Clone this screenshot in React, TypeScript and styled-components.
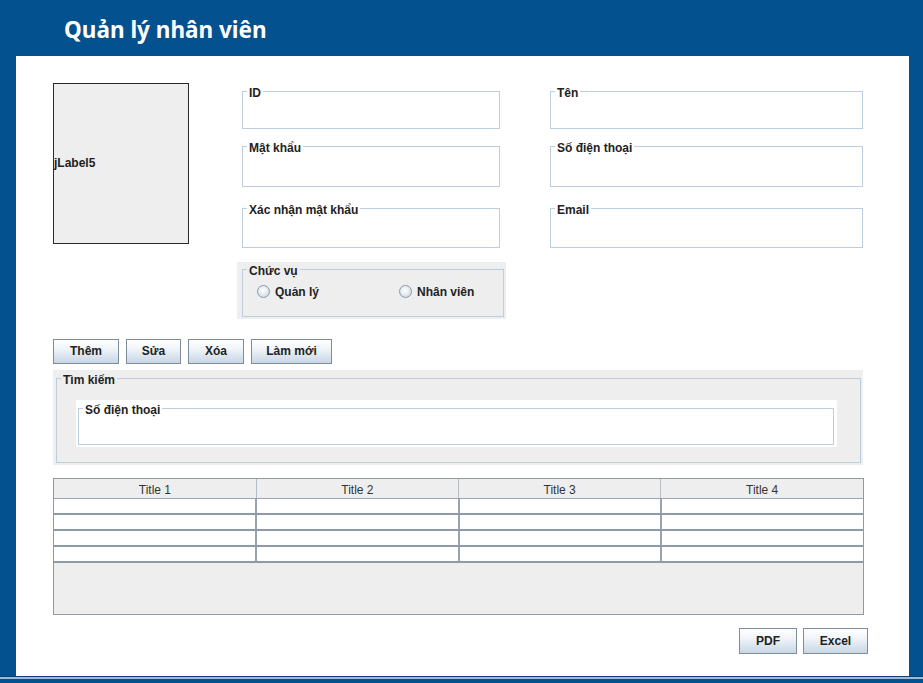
import React from 'react';
import styled, { createGlobalStyle } from 'styled-components';

const GlobalStyle = createGlobalStyle`
  html, body {
    margin: 0;
    padding: 0;
    background: #03528f;
  }
  body {
    font-family: "Liberation Sans", Arial, sans-serif;
    font-size: 12px;
    color: #222;
  }
`;

const Window = styled.div`
  width: 923px;
  height: 683px;
  background: #03528f;
  display: flex;
  flex-direction: column;
  overflow: hidden;
`;

const Header = styled.header`
  height: 56px;
  box-sizing: border-box;
  padding: 15px 0 0 64px;
`;

const Title = styled.h1`
  margin: 0;
  font-family: "Noto Sans", "Open Sans", sans-serif;
  font-weight: 700;
  font-size: 22.5px;
  line-height: 30px;
  color: #fff;
`;

const Panel = styled.main`
  margin-left: 16px;
  width: 893px;
  height: 621px;
  box-sizing: border-box;
  background: #fff;
  padding: 27px 47px 0 37px;
  display: flex;
  flex-direction: column;
`;

const Footer = styled.div`
  height: 6px;
  border-top: 1px solid #0a3e6e;
  box-shadow: inset 0 2px 0 #9dbad8;
`;

const TopSection = styled.section`
  display: flex;
  align-items: flex-start;
`;

const ImageBox = styled.div`
  flex: none;
  width: 136px;
  height: 161px;
  box-sizing: border-box;
  border: 1px solid #2a2a2a;
  background: #eeeeee;
  display: flex;
  align-items: center;
  font-weight: 700;
`;

const FieldsGrid = styled.div`
  flex: none;
  margin: 2px 0 0 53px;
  display: grid;
  grid-template-columns: 258px 313px;
  grid-template-rows: 55px 62px 60px auto;
  column-gap: 50px;
  align-items: start;
`;

const Group = styled.fieldset<{ $h?: number }>`
  margin: 0;
  padding: 0;
  min-inline-size: 0;
  box-sizing: border-box;
  height: ${(p) => (p.$h ? `${p.$h}px` : '100%')};
  border: 1px solid #bccdde;
`;

const Legend = styled.legend`
  margin-left: 4px;
  padding: 2px 2px 0;
  line-height: 12px;
  font-size: 12px;
  font-weight: 700;
  color: #222;
`;

const FieldInput = styled.input`
  display: block;
  width: 100%;
  box-sizing: border-box;
  border: none;
  background: transparent;
  height: 22px;
  padding: 0 6px;
  font-family: inherit;
  font-size: 12px;
  outline: none;
`;

const RoleBox = styled.div`
  grid-column: 1;
  margin: 0 -6px 0 -5px;
  background: #eeeeee;
  padding: 1px 2px 2px 5px;
`;

const RadioRow = styled.div`
  display: flex;
  padding: 8px 0 0 14px;
`;

const RadioLabel = styled.label`
  flex: none;
  width: 142px;
  display: flex;
  align-items: center;
  gap: 5px;
  font-weight: 700;
  height: 14px;
`;

const Radio = styled.input`
  appearance: none;
  margin: 0;
  width: 13px;
  height: 13px;
  border-radius: 50%;
  border: 1px solid #8d9aa8;
  box-sizing: border-box;
  background: radial-gradient(circle at 45% 40%, #ffffff 0%, #e6ecf2 45%, #bfcad6 100%);
`;

const ButtonRow = styled.div`
  display: flex;
  gap: 7px;
  margin-top: 20px;
`;

const Button = styled.button<{ $w: number }>`
  width: ${(p) => p.$w}px;
  height: 25px;
  box-sizing: border-box;
  border: 1px solid #7f8d9b;
  background: linear-gradient(#ffffff 0%, #f2f6fa 35%, #c7d6e6 100%);
  font-family: inherit;
  font-size: 12px;
  font-weight: 700;
  color: #222;
  padding: 0;
`;

const SearchBox = styled.div`
  margin-top: 6px;
  width: 810px;
  background: #eeeeee;
  box-sizing: border-box;
  padding: 2px 2px 2px 3px;
`;

const SearchGroup = styled(Group)`
  padding-top: 14px;
`;

const SearchField = styled.div`
  margin: 0 23px 0 19px;
  background: #fff;
  padding: 2px 3px 2px 2px;
`;

const TableBox = styled.div`
  margin-top: 13px;
  width: 811px;
  height: 137px;
  box-sizing: border-box;
  border: 1px solid #8f9aa6;
  background: #eeeeee;
`;

const Grid = styled.table`
  width: 100%;
  border-collapse: collapse;
  table-layout: fixed;
`;

const Th = styled.th`
  height: 16px;
  padding: 3px 0 0;
  background: #eeeeee;
  border-right: 1px solid #b4bcc4;
  border-bottom: 1px solid #9aa5b0;
  font-weight: 400;
  font-size: 12px;
  line-height: 14px;
  color: #333;
  &:last-child {
    border-right: none;
  }
`;

const Td = styled.td`
  height: 14px;
  padding: 0;
  background: #fff;
  border-right: 2px solid #97a3af;
  border-bottom: 2px solid #8e9aa7;
  &:last-child {
    border-right: none;
  }
`;

const ExportRow = styled.div`
  display: flex;
  justify-content: flex-end;
  gap: 6px;
  margin: 13px -6px 0 0;
`;

const ExportButton = styled(Button)`
  height: 26px;
`;

const fieldsLeft = [
  { label: 'ID', h: 44 },
  { label: 'Mật khẩu', h: 47 },
  { label: 'Xác nhận mật khẩu', h: 46 },
];

const fieldsRight = [
  { label: 'Tên', h: 44 },
  { label: 'Số điện thoại', h: 47 },
  { label: 'Email', h: 46 },
];

const App: React.FC = () => {
  const columns = ['Title 1', 'Title 2', 'Title 3', 'Title 4'];
  const rows = [0, 1, 2, 3];

  return (
    <Window>
      <GlobalStyle />
      <Header>
        <Title>Quản lý nhân viên</Title>
      </Header>
      <Panel>
        <TopSection>
          <ImageBox>jLabel5</ImageBox>
          <FieldsGrid>
            {fieldsLeft.map((f, i) => (
              <React.Fragment key={f.label}>
                <Group $h={f.h} style={{ gridColumn: 1, gridRow: i + 1 }}>
                  <Legend>{f.label}</Legend>
                  <FieldInput type={f.label.includes('khẩu') ? 'password' : 'text'} />
                </Group>
                <Group $h={fieldsRight[i].h} style={{ gridColumn: 2, gridRow: i + 1 }}>
                  <Legend>{fieldsRight[i].label}</Legend>
                  <FieldInput />
                </Group>
              </React.Fragment>
            ))}
            <RoleBox>
              <Group $h={54}>
                <Legend>Chức vụ</Legend>
                <RadioRow>
                  <RadioLabel>
                    <Radio type="radio" name="role" />
                    Quản lý
                  </RadioLabel>
                  <RadioLabel>
                    <Radio type="radio" name="role" />
                    Nhân viên
                  </RadioLabel>
                </RadioRow>
              </Group>
            </RoleBox>
          </FieldsGrid>
        </TopSection>

        <ButtonRow>
          <Button $w={66}>Thêm</Button>
          <Button $w={55}>Sửa</Button>
          <Button $w={56}>Xóa</Button>
          <Button $w={81}>Làm mới</Button>
        </ButtonRow>

        <SearchBox>
          <SearchGroup $h={91}>
            <Legend>Tìm kiếm</Legend>
            <SearchField>
              <Group $h={43}>
                <Legend>Số điện thoại</Legend>
                <FieldInput />
              </Group>
            </SearchField>
          </SearchGroup>
        </SearchBox>

        <TableBox>
          <Grid>
            <thead>
              <tr>
                {columns.map((c) => (
                  <Th key={c}>{c}</Th>
                ))}
              </tr>
            </thead>
            <tbody>
              {rows.map((r) => (
                <tr key={r}>
                  {columns.map((c) => (
                    <Td key={c} />
                  ))}
                </tr>
              ))}
            </tbody>
          </Grid>
        </TableBox>

        <ExportRow>
          <ExportButton $w={58}>PDF</ExportButton>
          <ExportButton $w={65}>Excel</ExportButton>
        </ExportRow>
      </Panel>
      <Footer />
    </Window>
  );
};

export default App;
